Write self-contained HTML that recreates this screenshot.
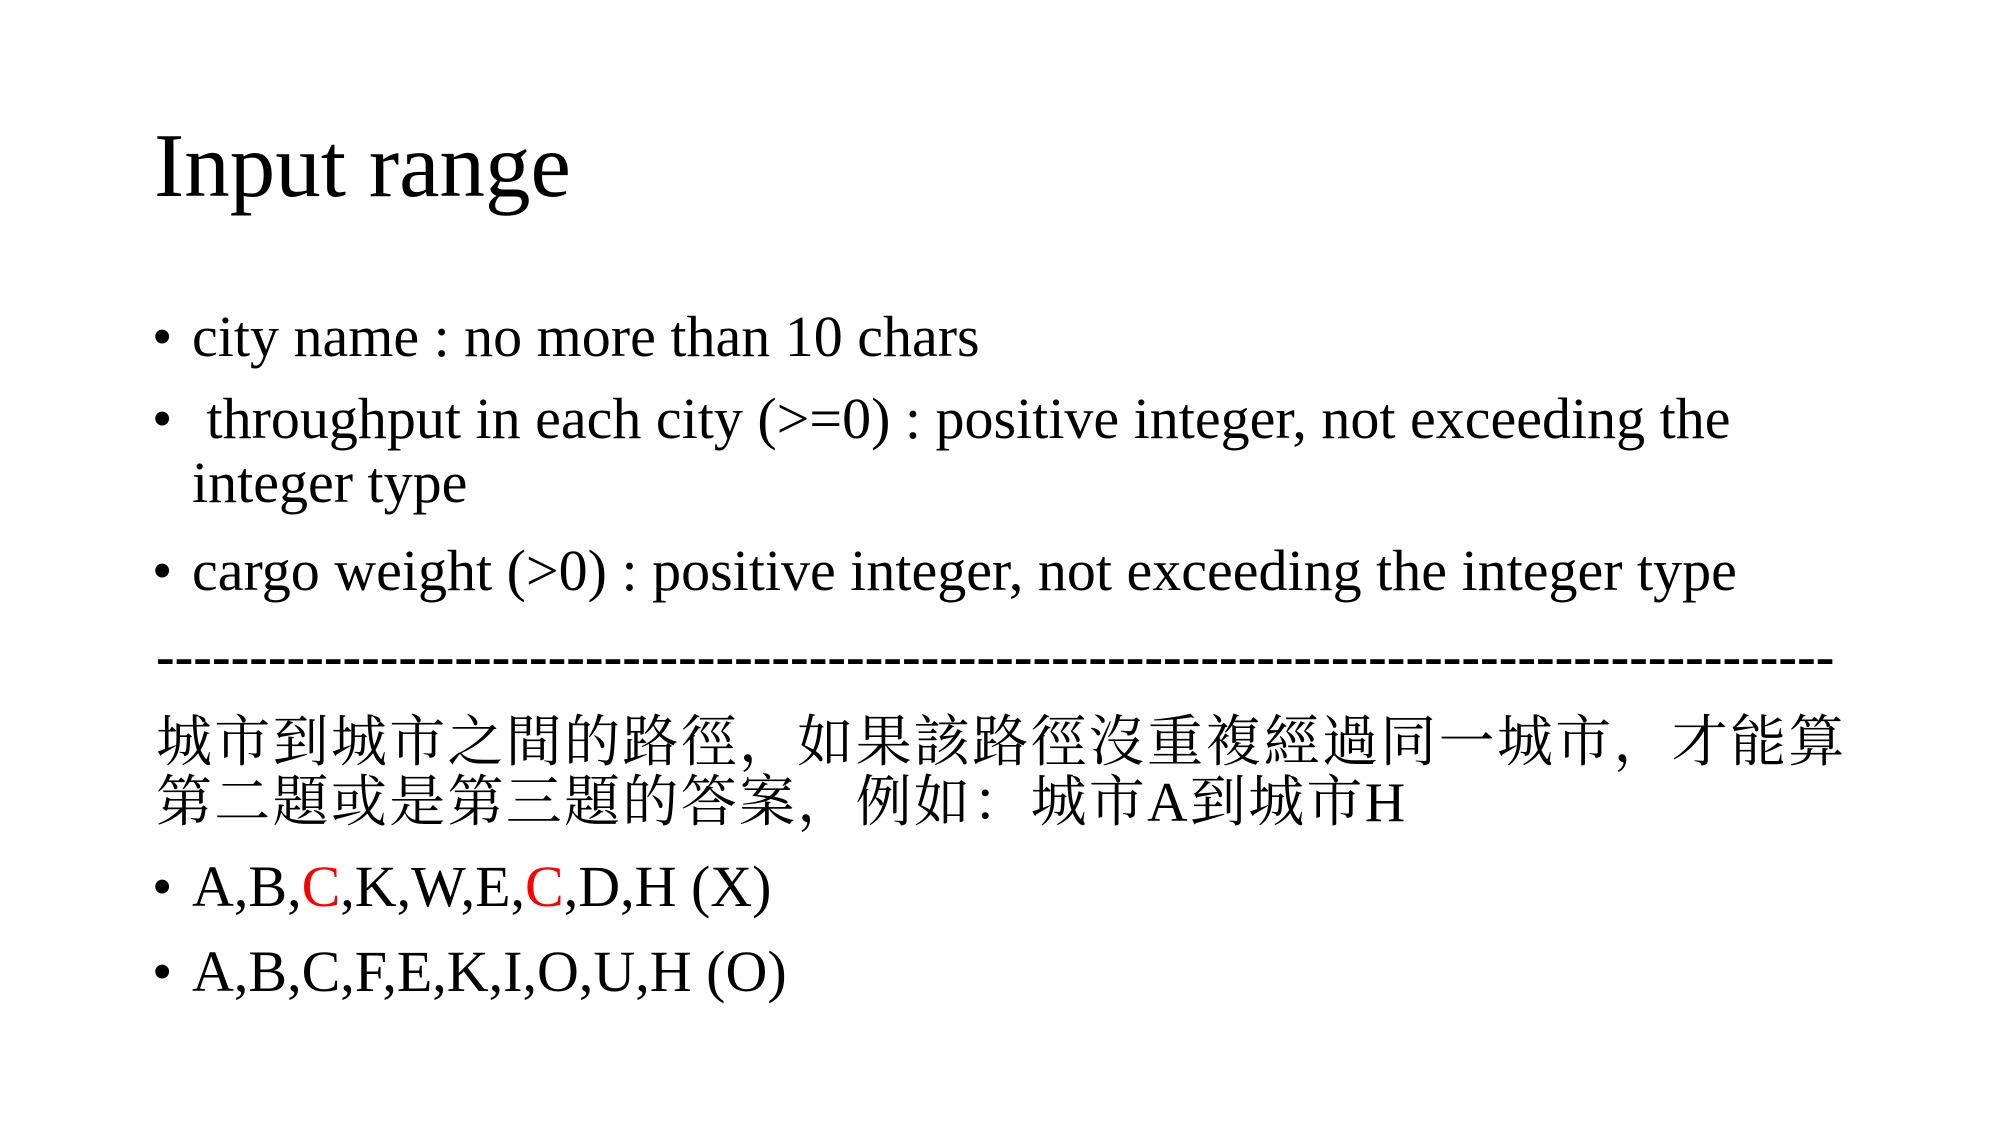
<!DOCTYPE html>
<html><head><meta charset="utf-8"><style>
html,body{margin:0;padding:0;background:#fff;}
body{width:2000px;height:1125px;position:relative;overflow:hidden;font-family:"Liberation Serif","Noto Serif CJK SC",serif;color:#000;}
.l{position:absolute;font-size:58px;line-height:58px;white-space:pre;}
.b{position:absolute;font-size:58px;line-height:58px;left:152px;}
.r{color:#f00;}
.cj{letter-spacing:2.3px;}
</style></head><body>
<div class="l" style="left:154px;top:120px;font-size:91px;line-height:92px;">Input range</div>

<div class="b" style="top:308px">•</div>
<div class="l" style="left:192px;top:308px">city name : no more than 10 chars</div>

<div class="b" style="top:390px">•</div>
<div class="l" style="left:192px;top:390px"> throughput in each city (&gt;=0) : positive integer, not exceeding the</div>
<div class="l" style="left:192px;top:454px">integer type</div>

<div class="b" style="top:542px">•</div>
<div class="l" style="left:192px;top:542px">cargo weight (&gt;0) : positive integer, not exceeding the integer type</div>

<div class="l" style="left:156px;top:628px;width:1680px;overflow:hidden;font-weight:bold;font-size:56px;">------------------------------------------------------------------------------------------------------------</div>

<div class="l cj" style="left:156px;top:714px;font-size:56px">城市到城市之間的路徑，如果該路徑沒重複經過同一城市，才能算</div>
<div class="l cj" style="left:156px;top:774px;font-size:56px">第二題或是第三題的答案，例如：城市A到城市H</div>

<div class="b" style="top:858px">•</div>
<div class="l" style="left:192px;top:858px">A,B,<span class="r">C</span>,K,W,E,<span class="r">C</span>,D,H (X)</div>

<div class="b" style="top:943px">•</div>
<div class="l" style="left:192px;top:943px">A,B,C,F,E,K,I,O,U,H (O)</div>
</body></html>
